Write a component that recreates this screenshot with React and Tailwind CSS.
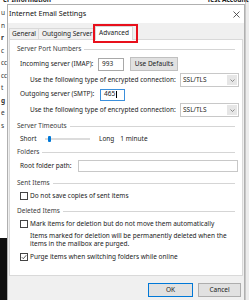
import React from "react";

const F = "font-['Noto_Sans',sans-serif]";

function Header({ children, className = "" }) {
  return (
    <div className={`flex items-center h-[10px] pl-[4px] pr-[4px] ${className}`}>
      <span className="text-[#3c3c3c] whitespace-nowrap">{children}</span>
      <div className="flex-1 ml-[3px] h-px bg-[#d5d5d5]" />
    </div>
  );
}

function Select() {
  return (
    <div className="flex h-[14px] w-[59px] border border-[#c8c8c8] bg-white shrink-0">
      <div className="flex-1 flex items-center pl-[2px] text-[#222]">SSL/TLS</div>
      <div className="w-[10px] my-[1px] mr-[1px] bg-[#e6e6e6] flex items-center justify-center">
        <svg width="5" height="3" viewBox="0 0 5 3">
          <path d="M0.5 0.5 L2.5 2.5 L4.5 0.5" stroke="#666" strokeWidth="0.7" fill="none" />
        </svg>
      </div>
    </div>
  );
}

function Check({ checked }) {
  return (
    <div className="w-[8px] h-[8px] border border-[#444] bg-white flex items-center justify-center shrink-0">
      {checked && (
        <svg width="6" height="6" viewBox="0 0 6 6">
          <path d="M0.8 3.2 L2.3 4.7 L5.3 1.2" stroke="#333" strokeWidth="0.8" fill="none" />
        </svg>
      )}
    </div>
  );
}

export default function App() {
  return (
    <div className={`relative w-[249px] h-[300px] overflow-hidden bg-white text-[6.5px] leading-none ${F}`}>
      {/* background window */}
      <div className="flex h-[300px]">
        <div className="w-[7px] flex flex-col">
          <div className="h-[4px] overflow-hidden" />
          <div className="flex-1 flex flex-col text-[#333] pl-[1px] pt-[6px] gap-[6px] overflow-hidden">
            <span>u</span>
            <span>n</span>
            <span className="font-bold">r</span>
            <span>c</span>
            <span>cc</span>
            <span>cc</span>
            <span>t</span>
            <span className="font-bold">g</span>
            <span>e</span>
            <span>s</span>
          </div>
          <div className="h-[62px] bg-[#101010]" />
        </div>
        <div className="flex-1" />
        <div className="w-[4px] bg-[#ececec] border-l border-[#c8c8c8]" />
      </div>
      <div className="absolute left-[3px] top-[-3px] font-bold text-[#222] whitespace-nowrap">er Information</div>
      <div className="absolute left-[207px] top-[-3px] font-bold text-[#222] whitespace-nowrap">Test Account</div>

      {/* dialog */}
      <div className="absolute left-[7px] top-[4px] w-[238px] h-[300px] border-l border-r border-t border-[#b0b0b0] bg-[#f0f0f0] flex flex-col">
        <div className="h-[18px] bg-white flex items-center pl-[1px] pr-[4px]">
          <span className="text-[7.2px] text-[#111]">Internet Email Settings</span>
          <div className="flex-1" />
          <svg width="7" height="7" viewBox="0 0 7 7">
            <path d="M0.5 0.5 L6.5 6.5 M6.5 0.5 L0.5 6.5" stroke="#333" strokeWidth="0.8" />
          </svg>
        </div>
        {/* tabs */}
        <div className="flex items-end h-[17px] pl-[1px] pr-[2px]">
          <div className="h-[12px] w-[30px] flex items-center justify-center border border-b-0 border-[#d9d9d9] bg-[#f0f0f0] text-[#222]">General</div>
          <div className="h-[12px] w-[56px] pl-[3px] flex items-center overflow-hidden border-t border-[#d9d9d9] bg-[#f0f0f0] text-[#222] whitespace-nowrap">Outgoing Server</div>
          <div className="relative h-[14px] w-[38px] flex items-center justify-center border border-b-0 border-[#d9d9d9] bg-white text-[#222] z-10">
            Advanced
            <div className="absolute left-[-3px] top-[-3px] w-[45px] h-[19px] border-2 border-[#e8101c]" />
          </div>
        </div>
        {/* panel */}
        <div className="mx-[1px] h-[237px] bg-white border border-[#d9d9d9] -mt-px flex flex-col text-[#222] pt-[4px] pl-[3px] pr-[3px]">
          <Header>Server Port Numbers</Header>
          <div className="mt-[3px] h-[14px] flex items-center pl-[7px]">
            <span className="w-[78px] whitespace-nowrap">Incoming server (IMAP):</span>
            <div className="w-[26px] h-[13px] border border-[#a8a8a8] bg-white flex items-center pl-[3px]">993</div>
            <div className="ml-[6px] w-[48px] h-[14px] border border-[#c0c0c0] bg-[#e1e1e1] flex items-center justify-center">Use Defaults</div>
          </div>
          <div className="mt-[2px] h-[14px] flex items-center pl-[17px]">
            <span className="w-[150px] whitespace-nowrap">Use the following type of encrypted connection:</span>
            <Select />
          </div>
          <div className="mt-[1px] h-[13px] flex items-center pl-[7px]">
            <span className="w-[80px] whitespace-nowrap">Outgoing server (SMTP):</span>
            <div className="w-[25px] h-[12px] border border-[#3b8fdb] bg-white flex items-center pl-[3px]">
              465<span className="ml-px w-px h-[7px] bg-black" />
            </div>
          </div>
          <div className="mt-[2px] h-[14px] flex items-center pl-[17px]">
            <span className="w-[150px] whitespace-nowrap">Use the following type of encrypted connection:</span>
            <Select />
          </div>
          <Header className="mt-[4px]">Server Timeouts</Header>
          <div className="mt-[2px] h-[12px] flex items-center pl-[7px]">
            <span className="w-[25px]">Short</span>
            <div className="relative w-[45px] h-[2px] bg-[#dcdcdc]">
              <div className="absolute left-[3px] top-[-2px] w-[3px] h-[6px] rounded-[1px] bg-[#0078d7]" />
            </div>
            <span className="ml-[9px]">Long</span>
            <span className="ml-[6px]">1 minute</span>
          </div>
          <Header className="mt-[2px]">Folders</Header>
          <div className="mt-[2px] h-[14px] flex items-center pl-[7px] pr-[1px]">
            <span className="w-[58px] whitespace-nowrap">Root folder path:</span>
            <div className="flex-1 h-[12px] border border-[#c8c8c8] bg-white" />
          </div>
          <Header className="mt-[5px]">Sent Items</Header>
          <div className="mt-[3px] h-[10px] flex items-center pl-[7px] gap-[2px]">
            <Check />
            <span className="whitespace-nowrap">Do not save copies of sent items</span>
          </div>
          <Header className="mt-[5px]">Deleted Items</Header>
          <div className="mt-[3px] h-[10px] flex items-center pl-[7px] gap-[2px]">
            <Check />
            <span className="whitespace-nowrap">Mark items for deletion but do not move them automatically</span>
          </div>
          <div className="mt-[3px] pl-[17px] leading-[8px] whitespace-nowrap">
            <div>Items marked for deletion will be permanently deleted when the</div>
            <div>items in the mailbox are purged.</div>
          </div>
          <div className="mt-[4px] h-[10px] flex items-center pl-[7px] gap-[2px]">
            <Check checked />
            <span className="whitespace-nowrap">Purge items when switching folders while online</span>
          </div>
        </div>
        {/* buttons */}
        <div className="mt-[7px] flex justify-end gap-[5px] pr-[3px]">
          <div className="w-[45px] h-[14px] border border-[#0078d7] bg-[#e1e1e1] flex items-center justify-center text-[#222]">OK</div>
          <div className="w-[43px] h-[14px] border border-[#adadad] bg-[#e1e1e1] flex items-center justify-center text-[#222]">Cancel</div>
        </div>
      </div>
    </div>
  );
}
